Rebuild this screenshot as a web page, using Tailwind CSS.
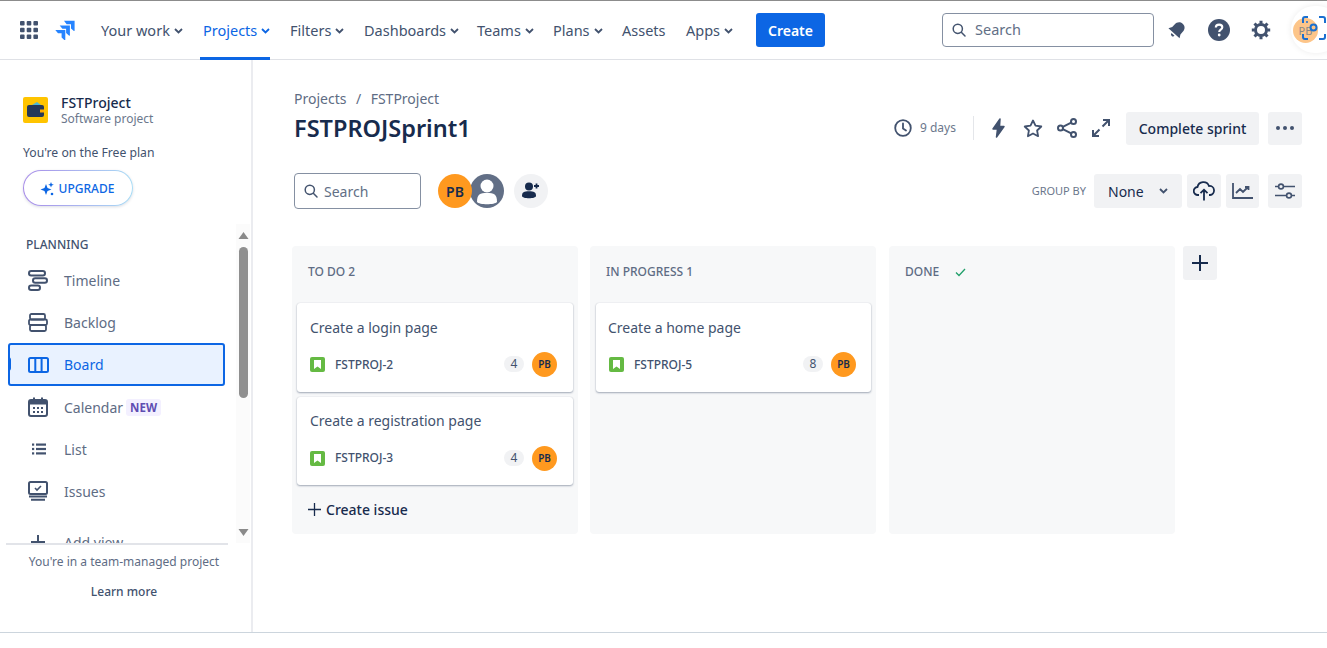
<!DOCTYPE html>
<html lang="en">

<head>
  <meta charset="UTF-8">
  <meta name="viewport" content="width=device-width, initial-scale=1.0">
  <script src="https://cdn.jsdelivr.net/npm/@tailwindcss/browser@4"></script>
  <title>FSTPROJSprint1</title>
</head>

<body class="bg-white">
  <div class="flex flex-col w-[1327px] h-[648px] overflow-hidden font-['Noto_Sans','Open_Sans',sans-serif] text-[#42526e]">

    <!-- top nav -->
    <header class="relative flex items-center h-[60px] shrink-0 border-t border-b border-t-[#8c8c8c] border-b-[#dfe1e6] text-[14.5px]">
      <svg class="ml-[20px] w-[18px] h-[18px] text-[#42526e]" viewBox="0 0 18 18" fill="currentColor">
        <rect x="0" y="0" width="4.6" height="4.6" rx="1"/><rect x="6.7" y="0" width="4.6" height="4.6" rx="1"/><rect x="13.4" y="0" width="4.6" height="4.6" rx="1"/>
        <rect x="0" y="6.7" width="4.6" height="4.6" rx="1"/><rect x="6.7" y="6.7" width="4.6" height="4.6" rx="1"/><rect x="13.4" y="6.7" width="4.6" height="4.6" rx="1"/>
        <rect x="0" y="13.4" width="4.6" height="4.6" rx="1"/><rect x="6.7" y="13.4" width="4.6" height="4.6" rx="1"/><rect x="13.4" y="13.4" width="4.6" height="4.6" rx="1"/>
      </svg>
      <svg class="ml-[17px] w-[20px] h-[20px] text-[#2684ff]" viewBox="0 0 20 20" fill="currentColor">
        <path d="M9 .8h10.6v9.6c0 .5-.6.8-1 .4l-2.6-2.4V4.2H11.6Z" />
        <path d="M4.7 5.4h10.2v9.8c0 .5-.6.7-1 .4l-2.8-2.5V8.8H7.4Z" />
        <path d="M.3 10h10v9.7c0 .4-.6.7-1 .3l-2.7-2.5v-4.2H3Z" />
      </svg>

      <nav class="flex items-center h-full ml-[26px]">
        <a class="flex items-center gap-[4px] w-[102px] pt-[2px]">Your work
          <svg class="w-[9px] h-[6px]" viewBox="0 0 9 6" fill="none" stroke="currentColor" stroke-width="1.8"><path d="M1 1l3.500 3.500L8 1" /></svg>
        </a>
        <a class="relative flex items-center gap-[4px] w-[87px] h-full pt-[2px] text-[#0c66e4]">Projects
          <svg class="w-[9px] h-[6px]" viewBox="0 0 9 6" fill="none" stroke="currentColor" stroke-width="1.8"><path d="M1 1l3.500 3.500L8 1" /></svg>
          <span class="absolute left-[-3px] bottom-[-1px] w-[70px] h-[3px] bg-[#0c66e4]"></span>
        </a>
        <a class="flex items-center gap-[4px] w-[74px] pt-[2px]">Filters
          <svg class="w-[9px] h-[6px]" viewBox="0 0 9 6" fill="none" stroke="currentColor" stroke-width="1.8"><path d="M1 1l3.500 3.500L8 1" /></svg>
        </a>
        <a class="flex items-center gap-[4px] w-[113px] pt-[2px]">Dashboards
          <svg class="w-[9px] h-[6px]" viewBox="0 0 9 6" fill="none" stroke="currentColor" stroke-width="1.8"><path d="M1 1l3.500 3.500L8 1" /></svg>
        </a>
        <a class="flex items-center gap-[4px] w-[76px] pt-[2px]">Teams
          <svg class="w-[9px] h-[6px]" viewBox="0 0 9 6" fill="none" stroke="currentColor" stroke-width="1.8"><path d="M1 1l3.500 3.500L8 1" /></svg>
        </a>
        <a class="flex items-center gap-[4px] w-[69px] pt-[2px]">Plans
          <svg class="w-[9px] h-[6px]" viewBox="0 0 9 6" fill="none" stroke="currentColor" stroke-width="1.8"><path d="M1 1l3.500 3.500L8 1" /></svg>
        </a>
        <a class="flex items-center w-[64px] pt-[2px]">Assets</a>
        <a class="flex items-center gap-[4px] w-[70px] pt-[2px]">Apps
          <svg class="w-[9px] h-[6px]" viewBox="0 0 9 6" fill="none" stroke="currentColor" stroke-width="1.8"><path d="M1 1l3.500 3.500L8 1" /></svg>
        </a>
        <button class="w-[69px] h-[34px] rounded-[3px] bg-[#0c66e4] text-white font-semibold text-[14px]">Create</button>
      </nav>

      <div class="flex items-center gap-[9px] ml-[117px] w-[212px] h-[34px] px-[9px] border border-[#8590a2] rounded-[4px] text-[14.5px] text-[#626f86]">
        <svg class="w-[14px] h-[14px]" viewBox="0 0 14 14" fill="none" stroke="#44546f" stroke-width="1.500"><circle cx="5.800" cy="5.800" r="4.600"/><path d="M9.300 9.300l3.700 3.700" stroke-linecap="round"/></svg>
        <span>Search</span>
      </div>
      <svg class="ml-[13px] w-[20px] h-[20px]" viewBox="0 0 20 20" fill="#42526e"><g transform="rotate(42 10 10)"><path d="M10 1.500c-3.800 0-5.500 2.800-5.500 6v3.500L2.500 14.500h15l-2-3.500V7.500c0-3.200-1.700-6-5.500-6Z"/><path d="M8 16h4a2 2 0 0 1-4 0Z"/></g></svg>
      <svg class="ml-[21px] w-[22px] h-[22px]" viewBox="0 0 22 22"><circle cx="11" cy="11" r="11" fill="#42526e"/><path d="M7.800 8.600c0-1.800 1.400-3 3.300-3s3.200 1.100 3.200 2.700c0 2.500-3.100 2.300-3.100 4.800" fill="none" stroke="#fff" stroke-width="2.100"/><circle cx="11.200" cy="16" r="1.400" fill="#fff"/></svg>
      <svg class="ml-[21px] w-[20px] h-[20px]" viewBox="0 0 20 20" fill="none" stroke="#42526e" stroke-width="3"><circle cx="10" cy="10" r="5.500"/><path d="M10 .8v3M10 16.200v3M.8 10h3M16.200 10h3M3.500 3.500l2.100 2.100M14.400 14.400l2.100 2.100M16.500 3.500l-2.100 2.100M5.600 14.400l-2.100 2.100" stroke-width="3"/></svg>

      <!-- avatar with the screenshot extension's button on top of it -->
      <div class="absolute left-[1291px] top-[5px] w-[50px] h-[47px] rounded-full bg-white shadow-[0_0_6px_rgba(0,0,0,0.08)]"></div>
      <div class="absolute left-[1293px] top-[17px] w-[25px] h-[25px] rounded-full bg-[#fdc589] text-[11px] text-[#8a8a8a] leading-[25px] text-center">PB</div>
      <svg class="absolute left-[1302px] top-[15px] w-[25px] h-[25px]" viewBox="0 0 25 25" fill="none" stroke="#1a6fd0" stroke-width="2"><path d="M1 7V3q0-2 2-2h3M17 1h4q2 0 2 2v4M23 18v3q0 2-2 2h-4M6 23H3q-2 0-2-2v-3"/><circle cx="11.500" cy="11.500" r="3"/><circle cx="5" cy="6" r="1" fill="#1a6fd0" stroke="none"/></svg>
    </header>

    <div class="flex h-[573px] shrink-0 border-b border-[#ccd5dd]">
      <!-- sidebar -->
      <aside class="flex flex-col w-[253px] shrink-0 border-r-[2px] border-[#ebecf0]">
        <div class="flex items-center gap-[13px] ml-[23px] mt-[37px] h-[26px]">
          <div class="flex items-center justify-center w-[25px] h-[26px] rounded-[2px] bg-[#ffc400]">
            <svg class="w-[18px] h-[16px]" viewBox="0 0 18 16"><path d="M5 3l5-3 4 3Z" fill="#4bb8d8"/><rect x="0" y="3" width="17" height="12" rx="2" fill="#253858"/><rect x="13" y="7.500" width="4" height="3" fill="#ffab00"/></svg>
          </div>
          <div class="leading-none">
            <div class="text-[14px] font-medium text-[#172b4d] leading-[16px]">FSTProject</div>
            <div class="mt-[1px] text-[12px] text-[#6b778c] leading-[14px]">Software project</div>
          </div>
        </div>
        <div class="ml-[23px] mt-[21px] text-[12.2px] leading-[18px] text-[#42526e]">You're on the Free plan</div>
        <div class="ml-[23px] mt-[8px] w-[110px] h-[36px] p-[1px] rounded-full bg-linear-to-r from-[#a78be8] to-[#a8dcf5] shadow-[0_1px_3px_rgba(9,30,66,0.15)]">
          <div class="flex items-center justify-center gap-[5px] h-full pr-[2px] pt-[1px] rounded-full bg-white text-[12px] font-medium text-[#0c66e4]">
            <svg class="w-[14px] h-[14px]" viewBox="0 0 14 14" fill="#0c66e4"><path d="M6 2l1.500 4L11.500 7.500 7.500 9 6 13 4.500 9 .5 7.500 4.500 6Z"/><path d="M11 0l.8 2 2 .8-2 .8-.8 2-.8-2-2-.8 2-.8Z"/><circle cx="12" cy="12" r="1.300"/></svg>
            UPGRADE
          </div>
        </div>

        <div class="flex mt-[18px] h-[319px] shrink-0 overflow-hidden">
          <div class="w-[236px] shrink-0 overflow-hidden pt-[13px]">
            <div class="ml-[26px] text-[12px] font-medium leading-[16px] text-[#42526e]">PLANNING</div>
            <ul class="mt-[6px] ml-[8px] w-[217px] text-[14px] text-[#5e6c84]">
              <li class="flex items-center h-[42px] pl-[20px] gap-[16px]">
                <svg class="w-[20px] h-[21px]" viewBox="0 0 20 21" fill="none" stroke="#42526e" stroke-width="2"><rect x="1" y="1" width="16" height="4.500" rx="2.200"/><rect x="5" y="8.200" width="14" height="4.500" rx="2.200"/><rect x="1" y="15.500" width="11" height="4.500" rx="2.200"/></svg>
                Timeline
              </li>
              <li class="flex items-center h-[42px] pl-[20px] gap-[16px]">
                <svg class="w-[20px] h-[19px]" viewBox="0 0 20 19" fill="none" stroke="#42526e" stroke-width="1.800"><rect x="2" y="1" width="15" height="5.500" rx="1.500"/><rect x="1" y="6.500" width="18" height="5.500" rx="1.500"/><rect x="2" y="12" width="16" height="6" rx="1.500"/></svg>
                Backlog
              </li>
              <li class="relative flex items-center h-[43px] pl-[20px] gap-[15px] rounded-[3px] border-2 border-[#0c66e4] bg-[#e9f2ff] text-[#0c66e4]">
                <span class="absolute left-[-2px] top-[12px] w-[3px] h-[14px] rounded-r-[3px] bg-[#0c66e4]"></span>
                <svg class="-ml-[2px] w-[21px] h-[16px]" viewBox="0 0 21 16" fill="none" stroke="#0c66e4" stroke-width="2"><rect x="1" y="1" width="19" height="14" rx="1.500"/><path d="M7.300 1v14M13.600 1v14"/></svg>
                Board
              </li>
              <li class="flex items-center h-[42px] pl-[20px] gap-[16px]">
                <svg class="w-[20px] h-[20px]" viewBox="0 0 20 20"><rect x="1" y="3" width="18" height="16" rx="2" fill="none" stroke="#42526e" stroke-width="2"/><rect x="1" y="3" width="18" height="4.500" fill="#42526e"/><rect x="5" y="0.500" width="2" height="4" fill="#42526e"/><rect x="13" y="0.500" width="2" height="4" fill="#42526e"/><g fill="#42526e"><rect x="5" y="10" width="2" height="2"/><rect x="9" y="10" width="2" height="2"/><rect x="13" y="10" width="2" height="2"/><rect x="5" y="14" width="2" height="2"/><rect x="9" y="14" width="2" height="2"/><rect x="13" y="14" width="2" height="2"/></g></svg>
                <span class="flex items-center gap-[3px]">Calendar
                  <span class="px-[4px] rounded-[3px] bg-[#f3f0ff] text-[11.5px] leading-[17px] font-bold text-[#5e4db2]">NEW</span>
                </span>
              </li>
              <li class="flex items-center h-[42px] pl-[24px] gap-[18px]">
                <svg class="w-[14px] h-[12px]" viewBox="0 0 14 12" fill="#42526e"><rect x="0" y="0.500" width="2.200" height="2.200"/><rect x="0" y="4.900" width="2.200" height="2.200"/><rect x="0" y="9.300" width="2.200" height="2.200"/><rect x="4" y="0.500" width="10" height="2.200"/><rect x="4" y="4.900" width="10" height="2.200"/><rect x="4" y="9.300" width="10" height="2.200"/></svg>
                List
              </li>
              <li class="flex items-center h-[42px] pl-[20px] gap-[16px]">
                <svg class="w-[20px] h-[20px]" viewBox="0 0 20 20" fill="none" stroke="#42526e" stroke-width="2"><rect x="1" y="1" width="18" height="12" rx="1.500"/><path d="M7 7l2 2 4-4" stroke-width="1.600"/><path d="M1 15.500h18M3 18.800h14"/></svg>
                Issues
              </li>
              <li class="flex items-center h-[42px] pl-[22px] gap-[18px] mt-[9px]">
                <svg class="w-[16px] h-[16px]" viewBox="0 0 16 16" fill="none" stroke="#42526e" stroke-width="2"><path d="M8 1v14M1 8h14"/></svg>
                Add view
              </li>
            </ul>
          </div>
          <!-- scrollbar -->
          <div class="flex flex-col items-center w-[14px] bg-[#fbfbfb]">
            <svg class="mt-[8px] w-[11px] h-[7px]" viewBox="0 0 11 7" fill="#8a8a8a"><path d="M5.500 0l5 7H.5Z"/></svg>
            <div class="mt-[8px] w-[9px] h-[151px] rounded-full bg-[#8f8f8f]"></div>
            <svg class="mt-[131px] w-[11px] h-[7px]" viewBox="0 0 11 7" fill="#8a8a8a"><path d="M5.500 7l5-7H.5Z"/></svg>
          </div>
        </div>

        <div class="ml-[6px] w-[222px] pl-[14px] border-t-2 border-[#e2e4e9] text-center text-[12px] whitespace-nowrap">
          <div class="mt-[8px] leading-[18px] text-[#5e6c84]">You're in a team-managed project</div>
          <div class="mt-[12px] leading-[18px] font-medium text-[#42526e]">Learn more</div>
        </div>
      </aside>

      <!-- main -->
      <main class="flex flex-col flex-1 min-w-0">
        <div class="ml-[41px] mt-[28px] flex items-center gap-[9.500px] h-[20px] text-[14px] text-[#5e6c84]">
          <span>Projects</span><span>/</span><span>FSTProject</span>
        </div>

        <div class="flex items-center justify-between ml-[41px] mr-[25px] mt-[0px] h-[40px]">
          <h1 class="text-[23.5px] font-semibold text-[#172b4d] leading-[40px]">FSTPROJSprint1</h1>
          <div class="flex items-center">
            <svg class="w-[18px] h-[18px]" viewBox="0 0 18 18" fill="none" stroke="#42526e" stroke-width="1.800"><circle cx="9" cy="9" r="7.800"/><path d="M9 4.500V9.500l3 2" stroke-linecap="round"/></svg>
            <span class="ml-[8px] text-[12px] text-[#6b778c] w-[36px]">9 days</span>
            <span class="ml-[17px] w-px h-[24px] bg-[#e4e6ea]"></span>
            <svg class="ml-[17px] w-[15px] h-[20px]" viewBox="0 0 15 20" fill="#42526e"><path d="M9 1L2 11h4.500L5.500 19 13 8.500H8.500Z" stroke="#42526e" stroke-width="1.500" stroke-linejoin="round"/></svg>
            <svg class="ml-[17px] w-[20px] h-[19px]" viewBox="0 0 20 19" fill="none" stroke="#42526e" stroke-width="1.800" stroke-linejoin="round"><path d="M10 1.500l2.500 5.200 5.800.8-4.200 4 1 5.700-5.100-2.700-5.100 2.700 1-5.700-4.200-4 5.800-.8Z"/></svg>
            <svg class="ml-[14px] w-[20px] h-[20px]" viewBox="0 0 20 20" fill="none" stroke="#42526e" stroke-width="2"><circle cx="3.500" cy="10" r="2.500"/><circle cx="16.500" cy="3.500" r="2.500"/><circle cx="16.500" cy="16.500" r="2.500"/><path d="M5.800 8.800l8.400-4.200M5.800 11.200l8.400 4.200"/></svg>
            <svg class="ml-[15px] w-[18px] h-[18px]" viewBox="0 0 18 18" fill="none" stroke="#42526e" stroke-width="2"><path d="M11 1h6v6M17 1l-6.500 6.500M7 17H1v-6M1 17l6.500-6.500"/></svg>
            <button class="ml-[16px] w-[133px] h-[33px] rounded-[3px] bg-[#f1f2f4] text-[14px] font-medium text-[#172b4d]">Complete sprint</button>
            <button class="flex items-center justify-center gap-[3px] ml-[9px] w-[34px] h-[33px] rounded-[3px] bg-[#f1f2f4]">
              <span class="w-[4px] h-[4px] rounded-full bg-[#42526e]"></span><span class="w-[4px] h-[4px] rounded-full bg-[#42526e]"></span><span class="w-[4px] h-[4px] rounded-full bg-[#42526e]"></span>
            </button>
          </div>
        </div>

        <div class="flex items-center justify-between ml-[41px] mr-[25px] mt-[25px] h-[36px]">
          <div class="flex items-center">
            <div class="flex items-center gap-[6px] w-[127px] h-[36px] px-[9px] border border-[#8590a2] rounded-[4px] text-[14px] text-[#626f86]">
              <svg class="w-[14px] h-[14px]" viewBox="0 0 14 14" fill="none" stroke="#44546f" stroke-width="1.500"><circle cx="5.800" cy="5.800" r="4.600"/><path d="M9.300 9.300l3.700 3.700" stroke-linecap="round"/></svg>
              Search
            </div>
            <div class="relative z-10 ml-[17px] flex items-center justify-center w-[34px] h-[34px] rounded-full bg-[#ff991f] text-[14px] font-semibold text-[#172b4d]">PB</div>
            <svg class="-ml-[2px] w-[34px] h-[34px]" viewBox="0 0 34 34"><circle cx="17" cy="17" r="17" fill="#626f86"/><circle cx="17" cy="12" r="6.500" fill="#fff"/><path d="M7 28c0-8 3-9 10-9s10 1 10 9c-2 3-18 3-20 0Z" fill="#fff"/></svg>
            <div class="ml-[10px] flex items-center justify-center w-[34px] h-[34px] rounded-full bg-[#f1f2f4]">
              <svg class="w-[19px] h-[18px]" viewBox="0 0 19 18" fill="#172b4d"><circle cx="7" cy="4.500" r="4"/><path d="M0 14c0-4 2-4.800 7-4.800s7 .8 7 4.800c0 3-14 3-14 0Z"/><path d="M14.500 1.500v5M12 4h5" fill="none" stroke="#172b4d" stroke-width="1.800"/></svg>
            </div>
          </div>
          <div class="flex items-center">
            <span class="text-[11px] text-[#6b778c] mr-[8px]">GROUP BY</span>
            <div class="flex items-center justify-between w-[88px] h-[34px] pl-[14px] pr-[14px] rounded-[3px] bg-[#f1f2f4] text-[14px] text-[#172b4d]">None
              <svg class="w-[9px] h-[6px]" viewBox="0 0 9 6" fill="none" stroke="#42526e" stroke-width="1.800"><path d="M1 1l3.500 3.500L8 1" /></svg>
            </div>
            <div class="ml-[5px] flex items-center justify-center w-[34px] h-[34px] rounded-[3px] bg-[#f1f2f4]">
              <svg class="w-[22px] h-[20px]" viewBox="0 0 22 20" fill="none" stroke="#172b4d" stroke-width="1.800"><path d="M6 14H5a4 4 0 0 1-.5-8A6 6 0 0 1 16 5a4.500 4.500 0 0 1 1 9h-1"/><path d="M11 19.500V9M7.500 12.200L11 8.700l3.500 3.500"/></svg>
            </div>
            <div class="ml-[5px] flex items-center justify-center w-[33px] h-[34px] rounded-[3px] bg-[#f1f2f4]">
              <svg class="w-[21px] h-[16px]" viewBox="0 0 21 16" fill="none" stroke="#42526e" stroke-width="1.800"><path d="M1 0v15h20"/><path d="M4 10l4-4 3 3 5-5M13 4h3.500v3"/></svg>
            </div>
            <div class="ml-[9px] flex items-center justify-center w-[34px] h-[34px] rounded-[3px] bg-[#f1f2f4]">
              <svg class="w-[20px] h-[16px]" viewBox="0 0 20 16" fill="none" stroke="#42526e" stroke-width="1.600"><path d="M0 3.500h3.500M9 3.500h11M0 12.500h11M16.500 12.500H20"/><circle cx="6" cy="3.500" r="2.400"/><circle cx="14" cy="12.500" r="2.400"/></svg>
            </div>
          </div>
        </div>

        <!-- board -->
        <div class="flex items-start ml-[39px] mt-[37px] h-[288px]">
          <section class="flex flex-col w-[286px] h-full rounded-[4px] bg-[#f7f8f9]">
            <h2 class="flex items-center h-[52px] mb-[5px] pl-[16px] text-[12px] font-medium text-[#5e6c84]">TO DO 2</h2>
            <div class="flex flex-col gap-[5px] mx-[5px]">
              <article class="flex flex-col w-[276px] h-[89px] rounded-[3px] bg-white shadow-[0_1px_2px_rgba(9,30,66,0.35),0_0_1px_rgba(9,30,66,0.2)] px-[13px]">
                <div class="mt-[15px] text-[14px] leading-[20px] text-[#42526e]">Create a login page</div>
                <div class="flex items-center mt-[13px] h-[26px]">
                  <span class="flex items-center justify-center w-[15px] h-[15px] rounded-[2px] bg-[#65ba43]"><svg class="w-[7px] h-[9px]" viewBox="0 0 7 9" fill="#fff"><path d="M0 0h7v9L3.500 6.500 0 9Z"/></svg></span>
                  <span class="ml-[10px] pt-[2px] text-[12px] font-medium text-[#42526e]">FSTPROJ-2</span>
                  <span class="ml-auto flex items-center justify-center w-[20px] h-[16px] rounded-full bg-[#f1f2f4] text-[12px] text-[#42526e]">4</span>
                  <span class="ml-[8px] mr-[3px] flex items-center justify-center w-[25px] h-[25px] rounded-full bg-[#ff991f] text-[10px] font-semibold text-[#172b4d]">PB</span>
                </div>
              </article>
              <article class="flex flex-col w-[276px] h-[88px] rounded-[3px] bg-white shadow-[0_1px_2px_rgba(9,30,66,0.35),0_0_1px_rgba(9,30,66,0.2)] px-[13px]">
                <div class="mt-[14px] text-[14px] leading-[20px] text-[#42526e]">Create a registration page</div>
                <div class="flex items-center mt-[14px] h-[26px]">
                  <span class="flex items-center justify-center w-[15px] h-[15px] rounded-[2px] bg-[#65ba43]"><svg class="w-[7px] h-[9px]" viewBox="0 0 7 9" fill="#fff"><path d="M0 0h7v9L3.500 6.500 0 9Z"/></svg></span>
                  <span class="ml-[10px] text-[12px] font-medium text-[#42526e]">FSTPROJ-3</span>
                  <span class="ml-auto flex items-center justify-center w-[20px] h-[16px] rounded-full bg-[#f1f2f4] text-[12px] text-[#42526e]">4</span>
                  <span class="ml-[8px] mr-[3px] flex items-center justify-center w-[25px] h-[25px] rounded-full bg-[#ff991f] text-[10px] font-semibold text-[#172b4d]">PB</span>
                </div>
              </article>
            </div>
            <div class="flex items-center gap-[5px] ml-[16px] mt-[13px] h-[22px] text-[14px] font-medium text-[#172b4d]">
              <svg class="w-[13px] h-[13px]" viewBox="0 0 13 13" fill="none" stroke="#172b4d" stroke-width="1.300"><path d="M6.500 0v13M0 6.500h13"/></svg>
              Create issue
            </div>
          </section>

          <section class="flex flex-col ml-[12px] w-[286px] h-full rounded-[4px] bg-[#f7f8f9]">
            <h2 class="flex items-center h-[52px] mb-[5px] pl-[16px] text-[12px] font-medium text-[#5e6c84]">IN PROGRESS 1</h2>
            <article class="flex flex-col mx-[6px] w-[275px] h-[89px] rounded-[3px] bg-white shadow-[0_1px_2px_rgba(9,30,66,0.35),0_0_1px_rgba(9,30,66,0.2)] px-[13px]">
              <div class="mt-[15px] -ml-[1px] text-[14px] leading-[20px] text-[#42526e]">Create a home page</div>
              <div class="flex items-center mt-[13px] h-[26px]">
                <span class="flex items-center justify-center w-[15px] h-[15px] rounded-[2px] bg-[#65ba43]"><svg class="w-[7px] h-[9px]" viewBox="0 0 7 9" fill="#fff"><path d="M0 0h7v9L3.500 6.500 0 9Z"/></svg></span>
                <span class="ml-[10px] pt-[2px] text-[12px] font-medium text-[#42526e]">FSTPROJ-5</span>
                <span class="ml-auto flex items-center justify-center w-[20px] h-[16px] rounded-full bg-[#f1f2f4] text-[12px] text-[#42526e]">8</span>
                <span class="ml-[8px] mr-[2px] flex items-center justify-center w-[25px] h-[25px] rounded-full bg-[#ff991f] text-[10px] font-semibold text-[#172b4d]">PB</span>
              </div>
            </article>
          </section>

          <section class="flex flex-col ml-[13px] w-[286px] h-full rounded-[4px] bg-[#f7f8f9]">
            <h2 class="flex items-center gap-[16px] h-[52px] pl-[16px] text-[12px] font-medium text-[#5e6c84]">DONE
              <svg class="w-[11px] h-[9px]" viewBox="0 0 11 9" fill="none" stroke="#22a06b" stroke-width="1.300"><path d="M1 4.500l3 3L10 1"/></svg>
            </h2>
          </section>

          <button class="flex items-center justify-center ml-[8px] w-[34px] h-[34px] rounded-[3px] bg-[#f1f2f4]">
            <svg class="w-[18px] h-[18px]" viewBox="0 0 18 18" fill="none" stroke="#172b4d" stroke-width="2"><path d="M9 1v16M1 9h16"/></svg>
          </button>
        </div>
      </main>
    </div>
  </div>
</body>

</html>
